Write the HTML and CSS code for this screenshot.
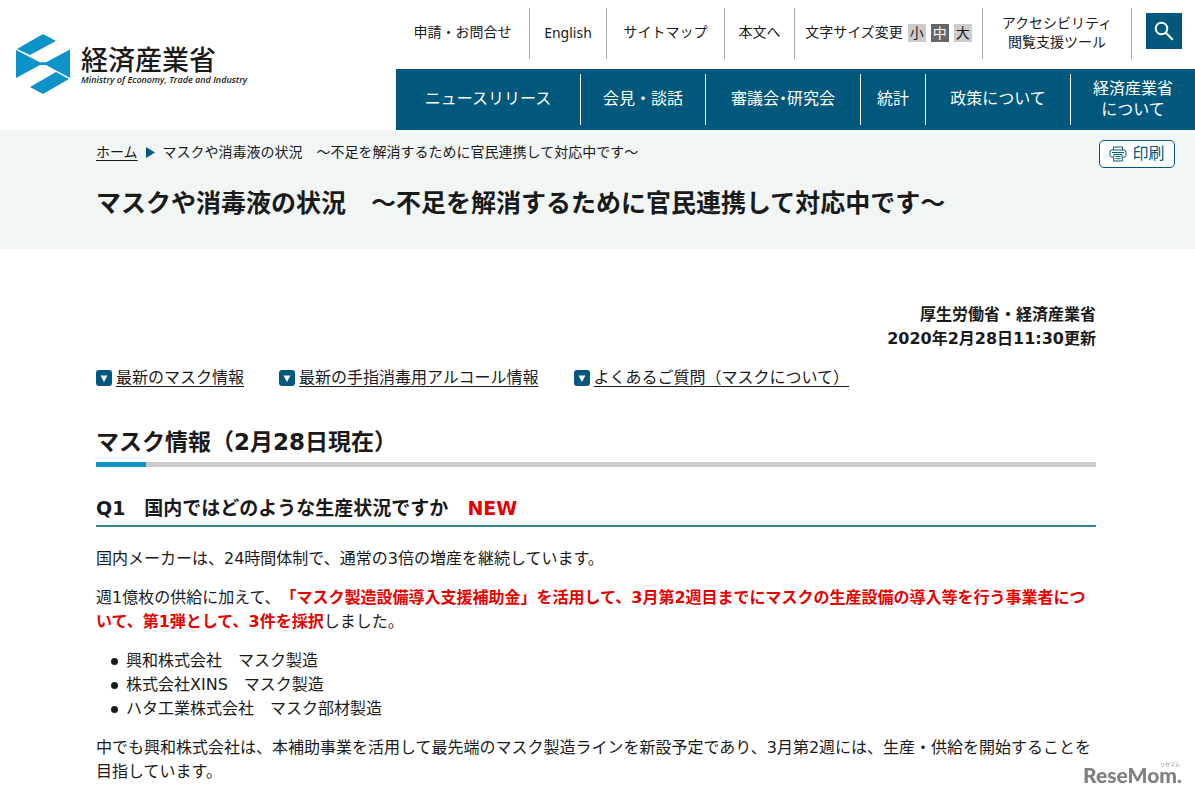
FILE: index.html
```html
<!DOCTYPE html>
<html lang="ja">
<head>
<meta charset="utf-8">
<meta name="viewport" content="width=device-width, initial-scale=1">
<title>マスクや消毒液の状況 (METI/経済産業省)</title>
<link rel="stylesheet" href="styles.css">
</head>
<body>
<header class="header">
  <a class="logo" href="#">
    <svg class="logo-mark" viewBox="0 0 54 60" aria-hidden="true">
      <path fill="#0c93ca" d="M27 0 40 7 14 21 1 15ZM0 16 24 28.300H30L54 15.500V44L30 31H24L0 44ZM40 38 53 45 27 60 14 53Z"/>
    </svg>
    <span class="logo-text">
      <span class="logo-ja">経済産業省</span>
      <span class="logo-en">Ministry of Economy, Trade and Industry</span>
    </span>
  </a>
  <div class="header-main">
    <div class="utility">
      <a class="utility-item" href="#">申請・お問合せ</a>
      <a class="utility-item english" href="#" lang="en">English</a>
      <a class="utility-item" href="#">サイトマップ</a>
      <a class="utility-item" href="#">本文へ</a>
      <div class="utility-item size-group">
        <span>文字サイズ変更</span>
        <button class="size" type="button">小</button>
        <button class="size size-current" type="button">中</button>
        <button class="size" type="button">大</button>
      </div>
      <a class="utility-item" href="#">アクセシビリティ<br>閲覧支援ツール</a>
      <div class="utility-item">
        <button class="search" type="button" aria-label="検索">
          <svg viewBox="0 0 20 20" width="20" height="20" aria-hidden="true"><circle cx="7.500" cy="7.500" r="5.800"/><path d="m11.800 11.800 7 7"/></svg>
        </button>
      </div>
    </div>
    <nav class="nav">
      <a class="nav-item" href="#">ニュースリリース</a>
      <a class="nav-item" href="#">会見・談話</a>
      <a class="nav-item" href="#">審議会<span class="dot">・</span>研究会</a>
      <a class="nav-item" href="#">統計</a>
      <a class="nav-item" href="#">政策について</a>
      <a class="nav-item" href="#">経済産業省<br>について</a>
    </nav>
  </div>
</header>
<div class="title-band">
  <div class="crumb-row">
    <div class="crumbs">
      <a href="#">ホーム</a>
      <svg class="crumb-arrow" viewBox="0 0 9 11" aria-hidden="true"><path d="M0 0 9 5.500 0 11Z"/></svg>
      <span>マスクや消毒液の状況　～不足を解消するために官民連携して対応中です～</span>
    </div>
    <button class="print" type="button">
      <svg viewBox="0 0 18 16" width="18" height="16" aria-hidden="true"><path d="M4.500 4V1h9v3M4 11H2.500Q1 11 1 9.500V6Q1 4 3 4h12q2 0 2 2v3.500Q17 11 15.500 11H14M3 6.500h12M5 8.500h8l.5 6.500h-9ZM6.500 10.500h5M6.500 12.700h5"/></svg>
      印刷
    </button>
  </div>
  <h1 class="title">マスクや消毒液の状況　～不足を解消するために官民連携して対応中です～</h1>
</div>
<main class="content">
  <p class="issuer">厚生労働省・経済産業省<br>2020年2月28日11:30更新</p>
  <nav class="anchors">
    <span class="anchor"><svg viewBox="0 0 16 16" aria-hidden="true"><rect width="16" height="16" rx="3"/><path d="M4.500 5.500h7L8 12Z"/></svg><a href="#mask">最新のマスク情報</a></span>
    <span class="anchor"><svg viewBox="0 0 16 16" aria-hidden="true"><rect width="16" height="16" rx="3"/><path d="M4.500 5.500h7L8 12Z"/></svg><a href="#">最新の手指消毒用アルコール情報</a></span>
    <span class="anchor"><svg viewBox="0 0 16 16" aria-hidden="true"><rect width="16" height="16" rx="3"/><path d="M4.500 5.500h7L8 12Z"/></svg><a href="#">よくあるご質問（マスクについて）</a></span>
  </nav>
  <h2 class="section" id="mask">マスク情報（2月28日現在）</h2>
  <h3 class="question">Q1　国内ではどのような生産状況ですか　<span class="new">NEW</span></h3>
  <p>国内メーカーは、24時間体制で、通常の3倍の増産を継続しています。</p>
  <p>週1億枚の供給に加えて、<strong class="red">「マスク製造設備導入支援補助金」を活用して、3月第2週目までにマスクの生産設備の導入等を行う事業者について、第1弾として、3件を採択</strong>しました。</p>
  <ul class="makers">
    <li>興和株式会社　マスク製造</li>
    <li>株式会社XINS　マスク製造</li>
    <li>ハタ工業株式会社　マスク部材製造</li>
  </ul>
  <p>中でも興和株式会社は、本補助事業を活用して最先端のマスク製造ラインを新設予定であり、3月第2週には、生産・供給を開始することを目指しています。</p>
</main>
<div class="watermark"><span class="watermark-ruby">リセマム</span><span>ReseMom.</span></div>
</body>
</html>
```
FILE: styles.css
```css
* { box-sizing: border-box; }

body {
  margin: 0;
  background: #fff;
  color: #1a1a1a;
  font: 16px/24px "DejaVu Sans", "Noto Sans CJK JP", sans-serif;
  text-spacing-trim: space-all;
}

a { color: inherit; }
button { font: inherit; padding: 0; border: 0; cursor: pointer; }

.header { display: grid; grid-template-columns: 396fr 799fr; }

.logo {
  display: flex;
  align-items: flex-start;
  gap: 11px;
  padding: 34px 0 0 16px;
  text-decoration: none;
}
.logo-mark { width: 54px; height: 60px; }
.logo-text { display: flex; flex-direction: column; padding-top: 10px; white-space: nowrap; }
.logo-ja { font: 500 27px/30px "Noto Sans CJK JP", sans-serif; }
.logo-en { font: italic 600 9px/12px "Open Sans", sans-serif; }

.utility {
  display: grid;
  grid-template-columns: 134fr 77fr 118fr 70fr 188fr 149fr 63fr;
  height: 69px;
  padding: 8px 0 10px;
  font-size: 14px;
  line-height: 19px;
}
.utility-item {
  display: flex;
  align-items: center;
  justify-content: center;
  padding-bottom: 2px;
  border-right: 1px solid #aaa;
  text-align: center;
  text-decoration: none;
  white-space: nowrap;
}
.utility-item:last-child { border-right: 0; align-items: flex-start; padding-top: 5px; }
.english { font-family: "Noto Sans", sans-serif; }
.size-group { gap: 5px; }
.size { width: 18px; height: 18px; line-height: 18px; background: #ccc; color: #1a1a1a; }
.size-current { background: #666; color: #fff; }
.search {
  display: grid;
  place-items: center;
  width: 36px;
  height: 36px;
  background: #00587c;
}
.search svg { fill: none; stroke: #fff; stroke-width: 2; }

.nav {
  display: grid;
  grid-template-columns: 185fr 125fr 155fr 65fr 145fr 124fr;
  height: 61px;
  padding: 5px 0;
  background: #00587c;
  color: #fff;
  line-height: 21px;
}
.nav-item {
  display: flex;
  align-items: center;
  justify-content: center;
  padding-bottom: 2px;
  border-right: 1px solid #fff;
  text-align: center;
  text-decoration: none;
  white-space: nowrap;
}
.nav-item:last-child { border-right: 0; }
.dot { width: 8px; display: flex; justify-content: center; }

.title-band { padding: 10px 20px 28px 96px; background: #f1f5f4; }
.crumb-row { display: flex; justify-content: space-between; }
.crumbs { display: flex; align-items: center; gap: 8px; height: 24px; font-size: 14px; }
.crumb-arrow { width: 9px; height: 11px; fill: #00587c; }
.print {
  display: flex;
  align-items: center;
  justify-content: center;
  gap: 5px;
  width: 76px;
  height: 28px;
  border: 1px solid #00587c;
  border-radius: 5px;
  background: #fff;
  color: #00587c;
}
.print svg { fill: none; stroke: #00587c; }
.title { margin: 18px 0 0; font-size: 25px; line-height: 35px; }

.content { padding: 54px 99px 0 96px; }
.content p { margin: 0 0 15px; }
.content .issuer { font-weight: bold; text-align: right; }

.anchors { display: flex; gap: 35px; }
.anchor { display: flex; align-items: center; gap: 4px; }
.anchor svg { width: 16px; height: 16px; fill: #00587c; }
.anchor path { fill: #fff; }
.anchors a, .crumbs a { text-decoration-skip-ink: none; text-underline-offset: 3px; }

.section {
  margin: 35px 0 0;
  padding-bottom: 7px;
  background: linear-gradient(to right, #0c93ca 50px, #ccc 50px) bottom / 100% 5px no-repeat;
  font-size: 23px;
  line-height: 35px;
}
.question {
  margin: 27px 0 20px;
  padding-bottom: 3px;
  border-bottom: 2px solid #2f8599;
  font-size: 19px;
  line-height: 28px;
}
.new, .red { color: #e60000; }

.makers { margin: 0 0 15px; padding: 0; list-style: none; }
.makers li { display: flex; align-items: center; padding-left: 15px; }
.makers li::before {
  content: "";
  width: 7px;
  height: 7px;
  margin-right: 8px;
  border-radius: 50%;
  background: #1a1a1a;
}

.watermark {
  position: fixed;
  right: 13px;
  bottom: 12px;
  display: flex;
  flex-direction: column;
  align-items: flex-end;
  color: #808080;
  font: 900 21px/18px Lato, sans-serif;
}
.watermark-ruby {
  padding-right: 2px;
  font: 5px/5px "Noto Sans CJK JP", sans-serif;
}
```
